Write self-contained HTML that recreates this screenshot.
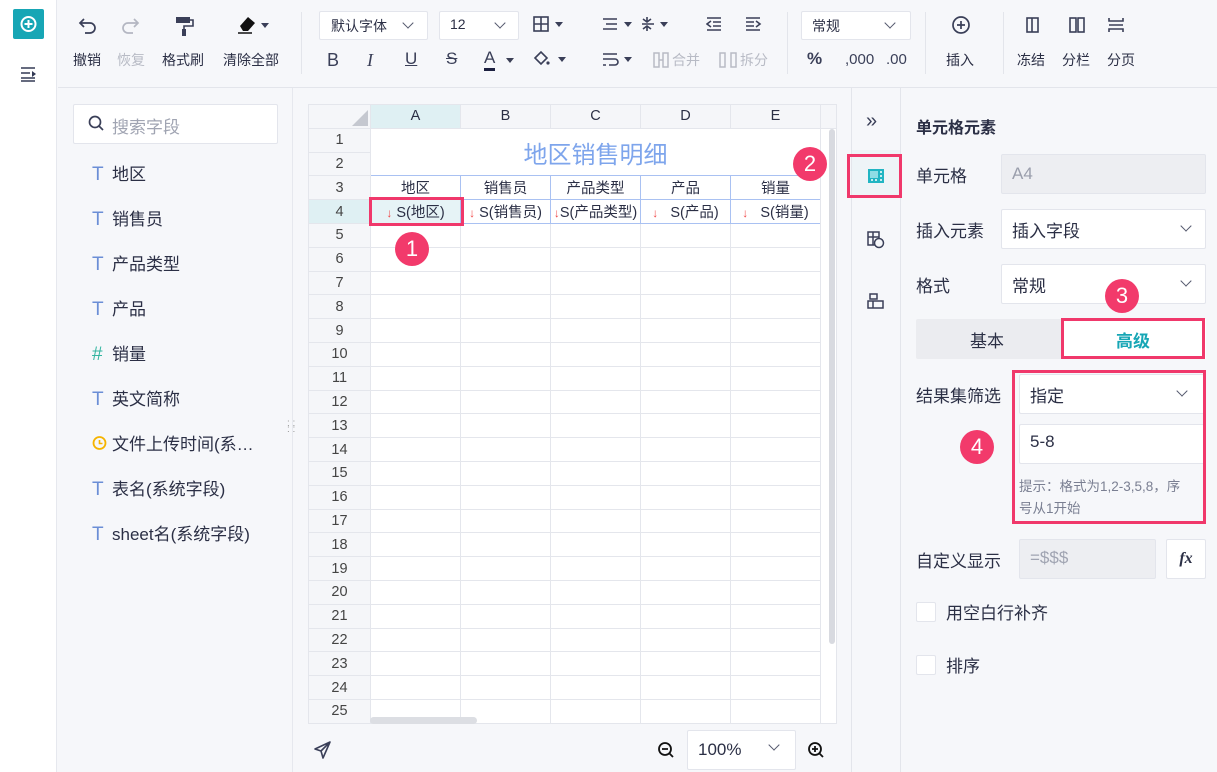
<!DOCTYPE html>
<html><head><meta charset="utf-8"><style>
*{box-sizing:border-box;margin:0;padding:0}
body{width:1217px;height:772px;overflow:hidden;background:#f6f7fa;font-family:"Liberation Sans","Noto Sans CJK SC",sans-serif;color:#2b2f45;position:relative;font-size:14px}
.abs{position:absolute}
.lbl{font-size:14px;color:#2b2f45}
.gray{color:#b8bbc5}
.sel{background:#fff;border:1px solid #e3e5ec;border-radius:2px}
.chev{position:absolute;width:8px;height:8px;border-right:1.5px solid #555a6e;border-bottom:1.5px solid #555a6e;transform:rotate(45deg)}
.tri{display:inline-block;width:0;height:0;border-left:4px solid transparent;border-right:4px solid transparent;border-top:5px solid #3b3f55;vertical-align:middle}
table{border-collapse:collapse;position:absolute;left:308px;top:104px;background:#fff}
td{border:1px solid #e4e6ec;height:23.8px;font-size:14.5px;text-align:center;padding:0;white-space:nowrap}
td.rh{width:62px;background:#f5f6f9;color:#444}
.badge{position:absolute;width:34px;height:34px;border-radius:50%;background:#f23a6b;color:#fff;font-size:22px;text-align:center;line-height:34px}
.red{position:absolute;border:3px solid #f0386b}
.field{position:absolute;left:92px;font-size:17px;color:#2b2f45}
.field b{display:inline-block;width:20px;color:#6b8ed6;font-weight:normal;font-size:19px}
.arr{color:#f04848;font-size:12px}
</style></head><body>
<div class="abs" style="left:0;top:0;width:57px;height:772px;background:#fff;border-right:1px solid #e6e8ee"></div>
<div class="abs" style="left:13px;top:9px;width:31px;height:30px;background:#17a6b5;border-radius:2px"><svg width="31" height="30"><circle cx="15.5" cy="15" r="7" fill="none" stroke="#fff" stroke-width="2"/><path d="M15.5 11v8M11.5 15h8" stroke="#fff" stroke-width="2"/></svg></div>
<svg class="abs" style="left:20px;top:66px" width="18" height="16"><path d="M1 2h14M1 7h9M1 12h14M1 15h14" stroke="#333a55" stroke-width="1.6"/><path d="M12 5l4 3-4 3z" fill="#333a55"/></svg>
<div class="abs" style="left:58px;top:87px;width:1159px;height:1px;background:#e3e5eb"></div>
<svg class="abs" style="left:78px;top:15px" width="22" height="20"><path d="M6 4L2 8l4 4M2 8h10a5 5 0 010 10H7" fill="none" stroke="#3a3f58" stroke-width="1.7"/></svg>
<svg class="abs" style="left:120px;top:15px" width="22" height="20"><path d="M14 4l4 4-4 4M18 8H8a5 5 0 000 10h5" fill="none" stroke="#b4b7c2" stroke-width="1.7"/></svg>
<svg class="abs" style="left:175px;top:15px" width="20" height="22"><rect x="1" y="2" width="14" height="6" fill="#3a3f58"/><path d="M15 5h3v6H9v4" fill="none" stroke="#3a3f58" stroke-width="1.6"/><rect x="7" y="14" width="4" height="7" fill="#3a3f58"/></svg>
<svg class="abs" style="left:236px;top:14px" width="36" height="22"><path d="M4 12l8-9 7 6-7 8H7z" fill="#111"/><path d="M2 19h14" stroke="#111" stroke-width="1.5"/><path d="M25 9h8l-4 5z" fill="#3a3f58"/></svg>
<div class="abs lbl" style="left:73px;top:50px">撤销</div>
<div class="abs lbl gray" style="left:117px;top:50px">恢复</div>
<div class="abs lbl" style="left:162px;top:50px">格式刷</div>
<div class="abs lbl" style="left:223px;top:50px">清除全部</div>
<div class="abs" style="left:301px;top:12px;width:1px;height:62px;background:#e3e5eb"></div>
<div class="abs sel" style="left:319px;top:11px;width:109px;height:29px"><span class="abs" style="left:11px;top:4px;font-size:14px">默认字体</span><i class="chev" style="left:84px;top:7px"></i></div>
<div class="abs sel" style="left:439px;top:11px;width:80px;height:29px"><span class="abs" style="left:10px;top:4px;font-size:14px">12</span><i class="chev" style="left:56px;top:7px"></i></div>
<svg class="abs" style="left:533px;top:16px" width="34" height="18"><rect x="1" y="1" width="14" height="14" fill="none" stroke="#3a3f58" stroke-width="1.6"/><path d="M8 1v14M1 8h14" stroke="#3a3f58" stroke-width="1.6"/><path d="M22 6h8l-4 5z" fill="#3a3f58"/></svg>
<div class="abs" style="left:327px;top:50px;font-size:18px;color:#3a3f58">B</div>
<div class="abs" style="left:367px;top:50px;font-size:18px;font-style:italic;color:#3a3f58;font-family:'Liberation Serif',serif">I</div>
<div class="abs" style="left:405px;top:49px;font-size:17px;text-decoration:underline;color:#3a3f58">U</div>
<div class="abs" style="left:446px;top:49px;font-size:17px;text-decoration:line-through;color:#3a3f58">S</div>
<div class="abs" style="left:484px;top:48px;font-size:17px;color:#3a3f58;border-bottom:3px solid #1c2040;line-height:20px">A</div><span class="abs tri" style="left:506px;top:58px"></span>
<svg class="abs" style="left:532px;top:50px" width="36" height="20"><path d="M3 8l6-6 6 6-6 6z" fill="none" stroke="#3a3f58" stroke-width="1.6"/><circle cx="16" cy="13" r="1.6" fill="#3a3f58"/><path d="M26 7h8l-4 5z" fill="#3a3f58"/></svg>
<div class="abs" style="left:787px;top:12px;width:1px;height:62px;background:#e3e5eb"></div>
<svg class="abs" style="left:602px;top:16px" width="90" height="18"><path d="M1 3h14M4 8h11M1 13h14" stroke="#3a3f58" stroke-width="1.6"/><path d="M22 6h8l-4 5z" fill="#3a3f58"/><path d="M45 1v4M41 3l4 3 4-3M40 8h12M45 15v-4M41 13l4-3 4 3" fill="none" stroke="#3a3f58" stroke-width="1.6"/><path d="M58 6h8l-4 5z" fill="#3a3f58"/></svg>
<svg class="abs" style="left:706px;top:16px" width="60" height="18"><path d="M1 2h14M7 6h8M7 10h8M1 14h14M5 5L1 8l4 3" fill="none" stroke="#3a3f58" stroke-width="1.6"/><path d="M40 2h14M40 6h8M40 10h8M40 14h14M50 5l4 3-4 3" fill="none" stroke="#3a3f58" stroke-width="1.6"/></svg>
<svg class="abs" style="left:602px;top:52px" width="36" height="16"><path d="M1 2h14M1 7h12a3 3 0 010 6H7M1 13h3" fill="none" stroke="#3a3f58" stroke-width="1.6"/><path d="M22 5h8l-4 5z" fill="#3a3f58"/></svg>
<svg class="abs" style="left:653px;top:52px" width="16" height="16"><path d="M1 1h5v14H1zM10 1h5v14h-5zM6 8h4" fill="none" stroke="#b8bbc5" stroke-width="1.5"/></svg>
<div class="abs gray" style="left:672px;top:50px;font-size:14px">合并</div>
<svg class="abs" style="left:719px;top:52px" width="18" height="16"><path d="M1 1h5v14H1zM12 1h5v14h-5z" fill="none" stroke="#b8bbc5" stroke-width="1.5"/></svg>
<div class="abs gray" style="left:740px;top:50px;font-size:14px">拆分</div>
<div class="abs sel" style="left:801px;top:11px;width:110px;height:29px"><span class="abs" style="left:10px;top:4px;font-size:14px">常规</span><i class="chev" style="left:84px;top:7px"></i></div>
<div class="abs" style="left:807px;top:49px;font-size:17px;font-weight:bold;color:#3a3f58">%</div>
<div class="abs" style="left:845px;top:51px;font-size:15px;color:#3a3f58">,000</div>
<div class="abs" style="left:886px;top:51px;font-size:15px;color:#3a3f58">.00</div>
<div class="abs" style="left:925px;top:12px;width:1px;height:62px;background:#e3e5eb"></div>
<svg class="abs" style="left:951px;top:15px" width="20" height="20"><circle cx="10" cy="10" r="8" fill="none" stroke="#3a3f58" stroke-width="1.7"/><path d="M10 6v8M6 10h8" stroke="#3a3f58" stroke-width="1.7"/></svg>
<div class="abs lbl" style="left:946px;top:50px">插入</div>
<div class="abs" style="left:1003px;top:12px;width:1px;height:62px;background:#e3e5eb"></div>
<svg class="abs" style="left:1025px;top:17px" width="120" height="18"><rect x="2" y="1" width="11" height="14" fill="none" stroke="#3a3f58" stroke-width="1.6"/><path d="M7 1v14" stroke="#3a3f58" stroke-width="1.6"/><rect x="45" y="1" width="6" height="14" fill="none" stroke="#3a3f58" stroke-width="1.6"/><rect x="53" y="1" width="6" height="14" fill="none" stroke="#3a3f58" stroke-width="1.6"/><path d="M84 1v3h14V1M84 8h14M84 15v-3h14v3" fill="none" stroke="#3a3f58" stroke-width="1.6"/></svg>
<div class="abs lbl" style="left:1017px;top:50px">冻结</div>
<div class="abs lbl" style="left:1062px;top:50px">分栏</div>
<div class="abs lbl" style="left:1107px;top:50px">分页</div>
<div class="abs" style="left:292px;top:88px;width:1px;height:684px;background:#e6e8ee"></div>
<div class="abs sel" style="left:73px;top:104px;width:205px;height:40px"><svg class="abs" style="left:14px;top:10px" width="18" height="18"><circle cx="7" cy="7" r="5.5" fill="none" stroke="#3a3f58" stroke-width="1.7"/><path d="M11 11l4 4" stroke="#3a3f58" stroke-width="1.7"/></svg><span class="abs" style="left:38px;top:8px;font-size:17px;color:#a0a4b2">搜索字段</span></div>
<div class="field" style="top:160px"><b>T</b>地区</div>
<div class="field" style="top:205px"><b>T</b>销售员</div>
<div class="field" style="top:250px"><b>T</b>产品类型</div>
<div class="field" style="top:295px"><b>T</b>产品</div>
<div class="field" style="top:340px"><b style="color:#33b5a0">#</b>销量</div>
<div class="field" style="top:385px"><b>T</b>英文简称</div>
<div class="field" style="top:430px"><b><svg width="16" height="16" style="vertical-align:-1px"><circle cx="7.5" cy="8" r="6" fill="none" stroke="#f5b400" stroke-width="1.8"/><path d="M7.5 5v3.5h3" fill="none" stroke="#f5b400" stroke-width="1.6"/></svg></b>文件上传时间(系…</div>
<div class="field" style="top:475px"><b>T</b>表名(系统字段)</div>
<div class="field" style="top:520px"><b>T</b>sheet名(系统字段)</div>
<div class="abs" style="left:287px;top:421px;font-size:10px;color:#999;line-height:6px">: :<br>: :</div>
<table>
<tr><td class="rh" style="background:#f5f6f9;position:relative"><span class="abs" style="right:2px;bottom:2px;width:0;height:0;border-left:16px solid transparent;border-bottom:16px solid #c5c8d0"></span></td><td style="width:90px;background:#dff0f3">A</td><td style="width:90px;background:#f5f6f9">B</td><td style="width:90px;background:#f5f6f9">C</td><td style="width:90px;background:#f5f6f9">D</td><td style="width:90px;background:#f5f6f9">E</td><td style="width:16px;background:#f5f6f9"></td></tr>
<tr><td class="rh">1</td><td colspan="5" rowspan="2" style="font-size:24px;color:#7ea5ec;border:none;background:#fff">地区销售明细</td><td rowspan="27" style="background:#fff;position:relative"><div class="abs" style="left:8px;top:0;width:6px;height:515px;background:#d8dae0;border-radius:3px"></div></td></tr>
<tr><td class="rh">2</td></tr>
<tr><td class="rh">3</td><td style="border-color:#a9c1f2">地区</td><td style="border-color:#a9c1f2">销售员</td><td style="border-color:#a9c1f2">产品类型</td><td style="border-color:#a9c1f2">产品</td><td style="border-color:#a9c1f2">销量</td></tr>
<tr><td class="rh" style="background:#dff0f3">4</td><td style="border-color:#a9c1f2;background:#e6f3f6"><span class="arr">↓</span> S(地区)</td><td style="border-color:#a9c1f2"><span class="arr">↓</span> S(销售员)</td><td style="border-color:#a9c1f2"><span class="arr">↓</span>S(产品类型)</td><td style="border-color:#a9c1f2"><span class="arr">↓</span>&nbsp;&nbsp; S(产品)</td><td style="border-color:#a9c1f2"><span class="arr">↓</span>&nbsp;&nbsp; S(销量)</td></tr>
<tr><td class="rh">5</td><td></td><td></td><td></td><td></td><td></td></tr>
<tr><td class="rh">6</td><td></td><td></td><td></td><td></td><td></td></tr>
<tr><td class="rh">7</td><td></td><td></td><td></td><td></td><td></td></tr>
<tr><td class="rh">8</td><td></td><td></td><td></td><td></td><td></td></tr>
<tr><td class="rh">9</td><td></td><td></td><td></td><td></td><td></td></tr>
<tr><td class="rh">10</td><td></td><td></td><td></td><td></td><td></td></tr>
<tr><td class="rh">11</td><td></td><td></td><td></td><td></td><td></td></tr>
<tr><td class="rh">12</td><td></td><td></td><td></td><td></td><td></td></tr>
<tr><td class="rh">13</td><td></td><td></td><td></td><td></td><td></td></tr>
<tr><td class="rh">14</td><td></td><td></td><td></td><td></td><td></td></tr>
<tr><td class="rh">15</td><td></td><td></td><td></td><td></td><td></td></tr>
<tr><td class="rh">16</td><td></td><td></td><td></td><td></td><td></td></tr>
<tr><td class="rh">17</td><td></td><td></td><td></td><td></td><td></td></tr>
<tr><td class="rh">18</td><td></td><td></td><td></td><td></td><td></td></tr>
<tr><td class="rh">19</td><td></td><td></td><td></td><td></td><td></td></tr>
<tr><td class="rh">20</td><td></td><td></td><td></td><td></td><td></td></tr>
<tr><td class="rh">21</td><td></td><td></td><td></td><td></td><td></td></tr>
<tr><td class="rh">22</td><td></td><td></td><td></td><td></td><td></td></tr>
<tr><td class="rh">23</td><td></td><td></td><td></td><td></td><td></td></tr>
<tr><td class="rh">24</td><td></td><td></td><td></td><td></td><td></td></tr>
<tr><td class="rh">25</td><td></td><td></td><td></td><td></td><td></td></tr>
</table>
<div class="abs" style="left:370px;top:717px;width:107px;height:7px;background:#dcdee3;border-radius:4px"></div>
<div class="red" style="left:369px;top:197px;width:95px;height:29px"></div>
<div class="badge" style="left:395px;top:232px">1</div>
<div class="badge" style="left:793px;top:147px">2</div>
<svg class="abs" style="left:313px;top:740px" width="20" height="20"><path d="M17 2L2 9l6 2 2 7zM8 11l9-9" fill="none" stroke="#3a3f58" stroke-width="1.6" stroke-linejoin="round"/></svg>
<svg class="abs" style="left:657px;top:741px" width="18" height="18"><circle cx="8" cy="8" r="6" fill="none" stroke="#111" stroke-width="1.8"/><path d="M5 8h6M12 12l4 4" stroke="#111" stroke-width="1.8"/></svg>
<div class="abs sel" style="left:687px;top:730px;width:109px;height:40px"><span class="abs" style="left:10px;top:9px;font-size:17px">100%</span><i class="chev" style="left:82px;top:10px"></i></div>
<svg class="abs" style="left:807px;top:741px" width="18" height="18"><circle cx="8" cy="8" r="6" fill="none" stroke="#111" stroke-width="1.8"/><path d="M5 8h6M8 5v6M12 12l4 4" stroke="#111" stroke-width="1.8"/></svg>
<div class="abs" style="left:851px;top:88px;width:1px;height:684px;background:#e3e5eb"></div>
<div class="abs" style="left:900px;top:88px;width:1px;height:684px;background:#e3e5eb"></div>
<div class="abs" style="left:866px;top:110px;font-size:20px;color:#3a3f58;letter-spacing:-6px">»</div>
<div class="abs" style="left:852px;top:150px;width:48px;height:48px;background:#eef4f7"></div>
<div class="red" style="left:847px;top:154px;width:55px;height:44px"></div>
<svg class="abs" style="left:867px;top:168px" width="18" height="16"><rect x="1" y="1" width="16" height="14" fill="#21b5c3"/><rect x="3" y="3" width="8" height="7" fill="#8fdde4"/><path d="M13 4h2M13 8h2M13 12h2M4 12h2M8 12h2" stroke="#fff" stroke-width="1.4"/></svg>
<svg class="abs" style="left:867px;top:231px" width="18" height="18"><rect x="1" y="1" width="11" height="13" fill="none" stroke="#3a3f58" stroke-width="1.5"/><path d="M1 6h11M6 1v13" stroke="#3a3f58" stroke-width="1.5"/><circle cx="12" cy="12" r="4.5" fill="#f6f7fa" stroke="#3a3f58" stroke-width="1.5"/></svg>
<svg class="abs" style="left:867px;top:293px" width="18" height="18"><rect x="3" y="1" width="7" height="5" fill="none" stroke="#3a3f58" stroke-width="1.5"/><rect x="1" y="8" width="15" height="7" fill="none" stroke="#3a3f58" stroke-width="1.5"/><path d="M6 8v7" stroke="#3a3f58" stroke-width="1.5"/></svg>
<div class="abs" style="left:916px;top:114px;font-size:16px;font-weight:bold">单元格元素</div>
<div class="abs" style="left:916px;top:162px;font-size:17px">单元格</div>
<div class="abs" style="left:1001px;top:154px;width:205px;height:40px;background:#edeef2;border:1px solid #e3e5ec;border-radius:2px"><span class="abs" style="left:10px;top:9px;font-size:17px;color:#9a9eac">A4</span></div>
<div class="abs" style="left:916px;top:217px;font-size:17px">插入元素</div>
<div class="abs sel" style="left:1001px;top:209px;width:205px;height:40px"><span class="abs" style="left:10px;top:7px;font-size:17px">插入字段</span><i class="chev" style="left:180px;top:12px"></i></div>
<div class="abs" style="left:916px;top:272px;font-size:17px">格式</div>
<div class="abs sel" style="left:1001px;top:264px;width:205px;height:40px"><span class="abs" style="left:10px;top:7px;font-size:17px">常规</span><i class="chev" style="left:180px;top:12px"></i></div>
<div class="abs" style="left:916px;top:319px;width:290px;height:40px;background:#ebecf0;border-radius:2px"></div>
<div class="abs" style="left:970px;top:327px;font-size:17px">基本</div>
<div class="abs" style="left:1063px;top:319px;width:143px;height:40px;background:#fff"></div>
<div class="red" style="left:1061px;top:318px;width:144px;height:41px"></div>
<div class="abs" style="left:1116px;top:327px;font-size:17px;font-weight:bold;color:#17a6b5">高级</div>
<div class="badge" style="left:1105px;top:279px">3</div>
<div class="abs" style="left:916px;top:382px;font-size:17px">结果集筛选</div>
<div class="abs sel" style="left:1019px;top:374px;width:185px;height:40px;border-right:none"><span class="abs" style="left:10px;top:7px;font-size:17px">指定</span><i class="chev" style="left:158px;top:12px"></i></div>
<div class="abs sel" style="left:1019px;top:424px;width:185px;height:40px;border-right:none"><span class="abs" style="left:10px;top:7px;font-size:17px">5-8</span></div>
<div class="abs" style="left:1019px;top:476px;width:182px;font-size:13.5px;line-height:22px;color:#7a7f92">提示：格式为1,2-3,5,8，序<br>号从1开始</div>
<div class="red" style="left:1012px;top:370px;width:194px;height:154px"></div>
<div class="badge" style="left:960px;top:430px">4</div>
<div class="abs" style="left:916px;top:547px;font-size:17px">自定义显示</div>
<div class="abs" style="left:1019px;top:539px;width:137px;height:40px;background:#edeef2;border:1px solid #e3e5ec;border-radius:2px"><span class="abs" style="left:10px;top:8px;font-size:17px;color:#a0a4b2">=$$$</span></div>
<div class="abs sel" style="left:1166px;top:539px;width:40px;height:40px;text-align:center;line-height:38px;font-style:italic;font-weight:bold;font-size:16px;font-family:'Liberation Serif',serif">fx</div>
<div class="abs" style="left:916px;top:602px;width:20px;height:20px;background:#fff;border:1px solid #e3e5ec;border-radius:2px"></div>
<div class="abs" style="left:946px;top:599px;font-size:17px">用空白行补齐</div>
<div class="abs" style="left:916px;top:655px;width:20px;height:20px;background:#fff;border:1px solid #e3e5ec;border-radius:2px"></div>
<div class="abs" style="left:946px;top:652px;font-size:17px">排序</div>
</body></html>
